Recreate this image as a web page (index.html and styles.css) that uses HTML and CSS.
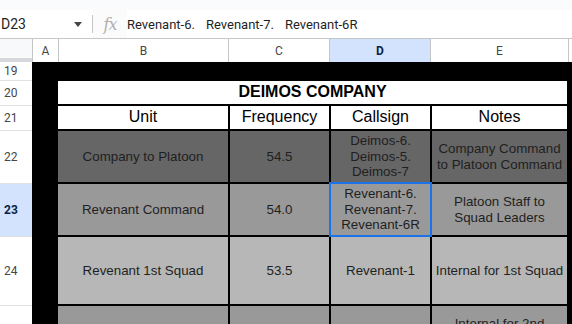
FILE: index.html
```html
<!DOCTYPE html>
<html>
<head>
<meta charset="utf-8">
<link rel="stylesheet" href="styles.css">
</head>
<body>
<div class="app">
  <div class="topbar"></div>
  <div class="formula">
    <div class="namebox">D23</div>
    <div class="caret"><svg width="8" height="5" viewBox="0 0 8 5"><path d="M0 0h8L4 5z" fill="#444746"/></svg></div>
    <div class="sep"></div>
    <div class="fx"><span>fx</span></div>
    <div class="ftext"><span>Revenant-6.</span><span>Revenant-7.</span><span>Revenant-6R</span></div>
  </div>
  <div class="colhead">
    <div class="corner"></div>
    <div class="ch w-a">A</div>
    <div class="ch w-b">B</div>
    <div class="ch w-c">C</div>
    <div class="ch w-d sel">D</div>
    <div class="ch w-e">E</div>
    <div class="ch w-f"></div>
  </div>
  <div class="body">
    <div class="rowheads">
      <div class="rh h19">19</div>
      <div class="rh h20">20</div>
      <div class="rh h21">21</div>
      <div class="rh h22">22</div>
      <div class="rh h23 sel">23</div>
      <div class="rh h24">24</div>
      <div class="rh h25">25</div>
    </div>
    <div class="canvas">
      <div class="table">
        <div class="cell title">DEIMOS COMPANY</div>
        <div class="cell head">Unit</div>
        <div class="cell head">Frequency</div>
        <div class="cell head">Callsign</div>
        <div class="cell head">Notes</div>

        <div class="cell dark">Company to Platoon</div>
        <div class="cell dark">54.5</div>
        <div class="cell dark">Deimos-6.<br>Deimos-5.<br>Deimos-7</div>
        <div class="cell dark">Company Command<br>to Platoon Command</div>

        <div class="cell mid">Revenant Command</div>
        <div class="cell mid">54.0</div>
        <div class="cell mid active">Revenant-6.<br>Revenant-7.<br>Revenant-6R</div>
        <div class="cell mid">Platoon Staff to<br>Squad Leaders</div>

        <div class="cell light">Revenant 1st Squad</div>
        <div class="cell light">53.5</div>
        <div class="cell light">Revenant-1</div>
        <div class="cell light">Internal for 1st Squad</div>

        <div class="cell mid"></div>
        <div class="cell mid"></div>
        <div class="cell mid"></div>
        <div class="cell mid">Internal for 2nd<br>Squad</div>
      </div>
    </div>
  </div>
</div>
</body>
</html>
```

FILE: styles.css
```css
* { box-sizing: border-box; }
html, body { margin: 0; padding: 0; }
body { width: 572px; height: 324px; overflow: hidden; background: #fff; font-family: "Liberation Sans", Arial, sans-serif; }
.app { width: 572px; height: 324px; overflow: hidden; display: flex; flex-direction: column; }

.topbar { height: 10px; background: #f9fbfd; flex: none; }

.formula { height: 28px; flex: none; display: flex; align-items: center; background: #fff; font-family: Roboto, "Liberation Sans", sans-serif; color: #1f1f1f; }
.namebox { width: 70px; padding-left: 1px; font-size: 14px; }
.caret { width: 22px; display: flex; align-items: center; padding-left: 4px; }
.sep { width: 1px; height: 18px; background: #c7c7c7; }
.fx { width: 34px; height: 28px; display: flex; align-items: center; justify-content: center; background: #fbfbfb; }
.fx span { font-family: "DejaVu Serif", "Liberation Serif", serif; font-style: italic; color: #b0b0b0; font-size: 16px; letter-spacing: -1px; }
.ftext { display: flex; gap: 11px; font-size: 13px; padding-left: 0; white-space: nowrap; }

.colhead { height: 24px; flex: none; display: flex; border-top: 1px solid #c4c7c5; font-family: Roboto, "Liberation Sans", sans-serif; font-size: 12px; color: #444746; }
.corner { width: 32px; background: #f8f9fa; border-bottom: 4px solid #d5d7da; }
.ch { border-left: 1px solid #c4c7c5; display: flex; align-items: center; justify-content: center; background: #fff; }
.w-a { width: 26px; }
.w-b { width: 170px; }
.w-c { width: 101px; }
.w-d { width: 101px; }
.w-e { width: 138px; }
.w-f { flex: 1; }
.ch.sel { background: #d3e3fd; font-weight: bold; color: #0b1f47; }

.body { flex: 1; display: flex; min-height: 0; }
.rowheads { width: 32px; flex: none; font-family: Roboto, "Liberation Sans", sans-serif; font-size: 12px; color: #444746; }
.rh { border-top: 1px solid #e1e1e1; display: flex; align-items: center; padding-left: 4px; background: #fff; }
.rh.h19 { height: 18px; border-top: none; }
.rh.h20 { height: 25px; }
.rh.h21 { height: 25px; }
.rh.h22 { height: 53px; }
.rh.h23 { height: 53px; }
.rh.h24 { height: 69px; }
.rh.h25 { height: 90px; }
.rh.sel { background: #d3e3fd; font-weight: bold; color: #0b1f47; }

.canvas { flex: 1; background: #000; padding: 19px 0 0 26px; overflow: hidden; }
.table { display: grid; grid-template-columns: 170px 99px 99px 135px; grid-template-rows: 23px 23px 51px 51px 67px 50px; gap: 2px; width: 509px; }
.cell { display: flex; align-items: center; justify-content: center; text-align: center; font-size: 13.33px; color: #1f1f1f; line-height: 15.5px; }
.title { grid-column: 1 / 5; background: #fff; font-weight: bold; font-size: 16px; color: #000; padding-bottom: 2px; }
.head { background: #fff; font-size: 16px; color: #000; padding-bottom: 2px; }
.dark { background: #666666; }
.mid { background: #999999; }
.light { background: #b7b7b7; }
.active { outline: 2px solid #1a73e8; outline-offset: 0; position: relative; z-index: 1; }
```
